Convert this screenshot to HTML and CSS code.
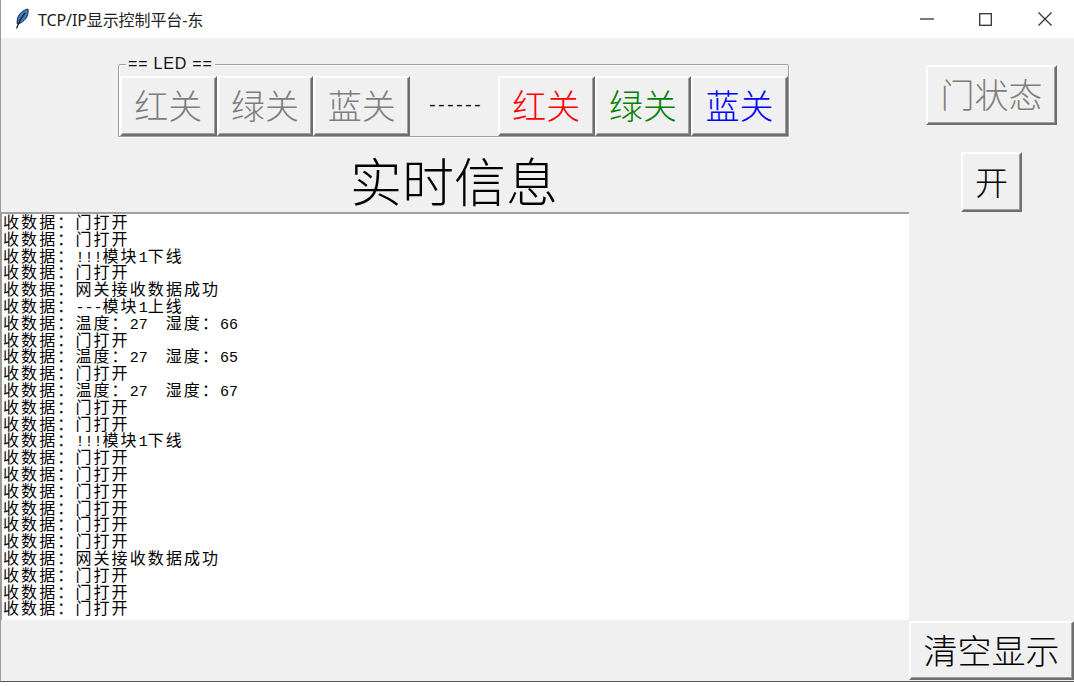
FILE: index.html
```html
<!DOCTYPE html>
<html lang="zh-CN">
<head>
<meta charset="utf-8">
<title>TCP/IP显示控制平台-东</title>
<link rel="stylesheet" href="styles.css">
</head>
<body>
<div class="window">
  <header class="titlebar">
    <svg class="app-icon" width="16" height="22" viewBox="0 0 16 22"><path d="M14 1C9 2 4.500 6 3.500 10.500c-.5 2.200-.5 4-.2 5.500C7 15.500 11 12.500 13 8.500 14 6 14.500 3 14 1z" fill="#3d7cc0" stroke="#1c2a3c" stroke-width="1"/><path d="M11 5 6 12 2.500 20.500" fill="none" stroke="#14202e" stroke-width="1.300"/></svg>
    <span class="title-text">TCP/IP显示控制平台-东</span>
    <div class="controls">
      <span class="control"><svg width="14" height="12" viewBox="0 0 14 12"><path d="M0 6h14" stroke="#333" stroke-width="1.300"/></svg></span>
      <span class="control"><svg width="13" height="13" viewBox="0 0 13 13"><rect x=".7" y=".7" width="11.600" height="11.600" fill="none" stroke="#333" stroke-width="1.300"/></svg></span>
      <span class="control"><svg width="14" height="14" viewBox="0 0 14 14"><path d="M.5.5l13 13M13.500.5l-13 13" stroke="#333" stroke-width="1.300"/></svg></span>
    </div>
  </header>
  <main class="content">
    <section class="left">
      <fieldset class="led">
        <legend class="led-label">== LED ==</legend>
        <button class="btn btn-led off">红关</button>
        <button class="btn btn-led off">绿关</button>
        <button class="btn btn-led off">蓝关</button>
        <span class="sep">------</span>
        <button class="btn btn-led red">红关</button>
        <button class="btn btn-led green">绿关</button>
        <button class="btn btn-led blue">蓝关</button>
      </fieldset>
      <h1 class="heading">实时信息</h1>
      <div class="log">
        <div class="line">收数据：门打开</div>
        <div class="line">收数据：门打开</div>
        <div class="line">收数据：<span class="m">!!!</span>模块<span class="m">1</span>下线</div>
        <div class="line">收数据：门打开</div>
        <div class="line">收数据：网关接收数据成功</div>
        <div class="line">收数据：<span class="m">---</span>模块<span class="m">1</span>上线</div>
        <div class="line">收数据：温度：<span class="m">27  </span>湿度：<span class="m">66</span></div>
        <div class="line">收数据：门打开</div>
        <div class="line">收数据：温度：<span class="m">27  </span>湿度：<span class="m">65</span></div>
        <div class="line">收数据：门打开</div>
        <div class="line">收数据：温度：<span class="m">27  </span>湿度：<span class="m">67</span></div>
        <div class="line">收数据：门打开</div>
        <div class="line">收数据：门打开</div>
        <div class="line">收数据：<span class="m">!!!</span>模块<span class="m">1</span>下线</div>
        <div class="line">收数据：门打开</div>
        <div class="line">收数据：门打开</div>
        <div class="line">收数据：门打开</div>
        <div class="line">收数据：门打开</div>
        <div class="line">收数据：门打开</div>
        <div class="line">收数据：门打开</div>
        <div class="line">收数据：网关接收数据成功</div>
        <div class="line">收数据：门打开</div>
        <div class="line">收数据：门打开</div>
        <div class="line">收数据：门打开</div>
      </div>
    </section>
    <aside class="right">
      <button class="btn btn-door off">门状态</button>
      <button class="btn btn-open">开</button>
      <button class="btn btn-clear">清空显示</button>
    </aside>
  </main>
</div>
</body>
</html>
```
FILE: styles.css
```css
* { box-sizing: border-box; }
html, body { margin: 0; padding: 0; background: #fff; }
body { width: 1074px; height: 686px; overflow: hidden; }
.window {
  width: 1074px;
  height: 682px;
  display: flex;
  flex-direction: column;
  border-left: 1px solid #9a9a9a;
  border-bottom: 1px solid #555;
  font-family: "Noto Sans CJK SC", sans-serif;
  font-weight: 300;
}
.titlebar {
  height: 38px;
  flex: none;
  display: flex;
  align-items: center;
  background: #fff;
  padding-left: 13px;
}
.app-icon { flex: none; }
.title-text {
  margin-left: 8px;
  font-family: "Noto Sans", "Noto Sans CJK SC", sans-serif;
  font-weight: 400;
  font-size: 16px;
  letter-spacing: -.1px;
  color: #222;
}
.controls { margin-left: auto; display: flex; }
.control {
  width: 59px;
  height: 38px;
  display: flex;
  align-items: center;
  justify-content: center;
}
.content {
  flex: 1;
  display: grid;
  grid-template-columns: 908px 1fr;
  grid-template-rows: 643px;
  background: #f0f0f0;
  min-height: 0;
}
.left { display: flex; flex-direction: column; align-items: stretch; height: 643px; }
.btn {
  font-family: inherit;
  font-weight: 300;
  background: #f0f0f0;
  border: 2px solid;
  border-color: #fdfdfd #6e6e6e #6e6e6e #fdfdfd;
  box-shadow: inset -1px -1px 0 #a0a0a0;
  padding: 0 0 2px;
  color: #000;
  line-height: 1;
  display: block;
}
.led {
  align-self: center;
  width: 671px;
  height: 79px;
  margin: 20px 3px 0 0;
  padding: 6px 1px 0 1px;
  border: 1px solid #a0a0a0;
  box-shadow: inset 1px 1px 0 #fff, 1px 1px 0 #fff;
  border-radius: 2px 2px 0 0;
  display: flex;
  align-items: flex-start;
  min-width: 0;
}
.led-label {
  margin-left: 6px;
  padding: 0 2px;
  font-family: "Liberation Sans", sans-serif;
  font-weight: 400;
  font-size: 16px;
  line-height: 12px;
  letter-spacing: .8px;
  color: #111;
}
.btn-led {
  width: 96.670px;
  height: 60px;
  font-size: 34px;
  flex: none;
}
.off { color: #7d7d7d; }
.red { color: #ff0000; }
.green { color: #008000; }
.blue { color: #0000ff; }
.sep {
  flex: none;
  width: 88px;
  height: 60px;
  display: flex;
  align-items: center;
  justify-content: center;
  font-family: "Liberation Mono", monospace;
  font-weight: 400;
  font-size: 18px;
  letter-spacing: -1.800px;
  color: #111;
}
.heading {
  margin: 12px 2px 0 0;
  height: 63px;
  text-align: center;
  font-weight: 300;
  font-size: 52px;
  line-height: 61px;
  color: #000;
}
.log {
  height: 408px;
  flex: none;
  background: #fff;
  border-top: 2px solid #a0a0a0;
  border-left: 1px solid #a0a0a0;
  padding: 0 0 0 1px;
  font-size: 16px;
  font-weight: 400;
  letter-spacing: 2.100px;
  color: #000;
  overflow: hidden;
}
.line { white-space: pre; height: 16.800px; line-height: 15px; }
.log .m {
  font-family: "Liberation Mono", monospace;
  font-weight: 400;
  font-size: 15px;
  letter-spacing: 0;
}
.right { display: flex; flex-direction: column; align-items: center; height: 643px; padding-bottom: 1px; }
.btn-door { width: 131px; height: 60px; font-size: 34px; margin-top: 27px; flex: none; }
.btn-open { width: 61px; height: 60px; font-size: 33px; margin-top: 27px; flex: none; }
.btn-clear { width: 165px; height: 59px; font-size: 34px; margin-top: auto; flex: none; }
```
